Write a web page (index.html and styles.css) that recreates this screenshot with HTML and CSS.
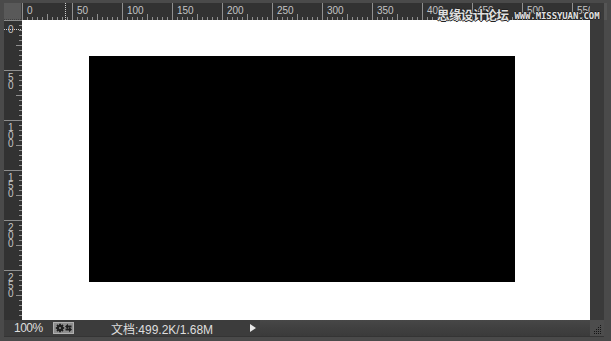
FILE: index.html
```html
<!DOCTYPE html>
<html lang="zh">
<head>
<meta charset="utf-8">
<title>Photoshop canvas</title>
<link rel="stylesheet" href="styles.css">
</head>
<body>
<div class="window">
  <div class="frame">
    <div class="corner"></div>
    <div class="hruler">
      <div class="hcell"><span>0</span></div>
      <div class="hcell"><span>50</span></div>
      <div class="hcell"><span>100</span></div>
      <div class="hcell"><span>150</span></div>
      <div class="hcell"><span>200</span></div>
      <div class="hcell"><span>250</span></div>
      <div class="hcell"><span>300</span></div>
      <div class="hcell"><span>350</span></div>
      <div class="hcell"><span>400</span></div>
      <div class="hcell"><span>450</span></div>
      <div class="hcell"><span>500</span></div>
      <div class="hcell"><span>550</span></div>
      <div class="hguide"></div>
    </div>
    <div class="topright"></div>

    <div class="vruler">
      <div class="vcell"><span>0</span></div>
      <div class="vcell"><span>5</span><span>0</span></div>
      <div class="vcell"><span>1</span><span>0</span><span>0</span></div>
      <div class="vcell"><span>1</span><span>5</span><span>0</span></div>
      <div class="vcell"><span>2</span><span>0</span><span>0</span></div>
      <div class="vcell"><span>2</span><span>5</span><span>0</span></div>
      <div class="vguide"></div>
    </div>
    <div class="canvas">
      <div class="shape"></div>
    </div>
    <div class="vscroll"></div>

    <div class="status">
      <div class="info">
        <span class="zoom">100%</span>
        <span class="toggle">
          <svg width="21" height="12" viewBox="0 0 21 12">
            <rect x="0" y="0" width="21" height="12" fill="#8e8e8e"/>
            <rect x="0.5" y="0.5" width="20" height="11" fill="none" stroke="#b0b0b0"/>
            <g stroke="#1e1e1e" stroke-width="1.8">
              <line x1="7" y1="1.8" x2="7" y2="10.2"/>
              <line x1="2.8" y1="6" x2="11.2" y2="6"/>
              <line x1="4" y1="3" x2="10" y2="9"/>
              <line x1="10" y1="3" x2="4" y2="9"/>
            </g>
            <circle cx="7" cy="6" r="3" fill="#1e1e1e"/>
            <circle cx="7" cy="6" r="1" fill="#8e8e8e"/>
            <path d="M12 4.5 L15 1.8 L15 3.5 L18.5 3.5 L18.5 5.5 L15 5.5 L15 7.2 Z" fill="#1e1e1e"/>
            <path d="M19 7.5 L16 4.8 L16 6.5 L12.5 6.5 L12.5 8.5 L16 8.5 L16 10.2 Z" fill="#1e1e1e"/>
          </svg>
        </span>
        <span class="doc">文档:499.2K/1.68M</span>
        <span class="play"></span>
      </div>
      <div class="hscroll"></div>
    </div>
    <div class="grip">
      <svg width="14" height="16" viewBox="0 0 14 16">
        <g fill="#141414">
          <rect x="10" y="5" width="1" height="1"/>
          <rect x="8" y="7" width="1" height="1"/><rect x="10" y="7" width="1" height="1"/>
          <rect x="6" y="9" width="1" height="1"/><rect x="8" y="9" width="1" height="1"/><rect x="10" y="9" width="1" height="1"/>
          <rect x="4" y="11" width="1" height="1"/><rect x="6" y="11" width="1" height="1"/><rect x="8" y="11" width="1" height="1"/><rect x="10" y="11" width="1" height="1"/>
          <rect x="4" y="13" width="1" height="1"/><rect x="6" y="13" width="1" height="1"/><rect x="8" y="13" width="1" height="1"/><rect x="10" y="13" width="1" height="1"/>
        </g>
      </svg>
    </div>
  </div>
  <div class="watermark"><span class="wm-cn">思缘设计论坛</span><span class="wm-en">WWW.MISSYUAN.COM</span></div>
</div>
</body>
</html>
```

FILE: styles.css
```css
* { box-sizing: border-box; }
html, body { margin: 0; padding: 0; }
body {
  width: 611px;
  height: 341px;
  overflow: hidden;
  background: #4a4a4a;
  font-family: "Liberation Sans", Arial, "Noto Sans CJK SC", sans-serif;
}
.window {
  position: relative;
  width: 611px;
  height: 341px;
  padding: 3px 0 0 4px;
  background: #4a4a4a;
}
.frame {
  display: grid;
  grid-template-columns: 18px 568px 14px 7px;
  grid-template-rows: 17px 300px 16px 1px 4px;
  width: 607px;
}
.corner {
  grid-column: 1; grid-row: 1;
  background:
    repeating-linear-gradient(to right, #3e3e3e 0 1px, transparent 1px 2px) left bottom / 100% 1px no-repeat,
    #595959;
  border-right: 1px solid #3a3a3a;
}
.hruler {
  grid-column: 2; grid-row: 1;
  position: relative;
  display: flex;
  overflow: hidden;
  background: #323232;
}
.hcell {
  flex: 0 0 50px;
  height: 17px;
  border-left: 1px solid #8f8f8f;
  background:
    linear-gradient(#8f8f8f, #8f8f8f) 24px bottom / 1px 6px no-repeat,
    repeating-linear-gradient(to right, transparent 0 4px, #8f8f8f 4px 5px) left bottom / 100% 3px no-repeat;
}
.hcell span {
  display: block;
  padding: 3px 0 0 4px;
  font-size: 10px;
  line-height: 9px;
  color: #c4c4c4;
}
.hguide {
  position: absolute;
  left: 43px; top: 0;
  width: 1px; height: 17px;
  background: repeating-linear-gradient(#d0d0d0 0 1px, transparent 1px 2px);
}
.topright {
  grid-column: 3 / span 2; grid-row: 1;
  background: #3a3a3a;
  border-right: 4px solid #4a4a4a;
  box-shadow: inset -3px 0 0 #555;
}
.vruler {
  grid-column: 1; grid-row: 2;
  position: relative;
  display: flex;
  flex-direction: column;
  overflow: hidden;
  background: #323232;
}
.vcell {
  flex: 0 0 50px;
  border-top: 1px solid #8f8f8f;
  padding: 3px 0 0 4px;
  display: flex;
  flex-direction: column;
  background:
    linear-gradient(#8f8f8f, #8f8f8f) right 24px / 6px 1px no-repeat,
    repeating-linear-gradient(transparent 0 4px, #8f8f8f 4px 5px) right top / 3px 100% no-repeat;
}
.vcell span {
  display: block;
  font-size: 10px;
  line-height: 8px;
  height: 8px;
  color: #c4c4c4;
}
.vcell:first-child { padding-top: 5px; }
.vguide {
  position: absolute;
  left: 0; top: 9px;
  width: 18px; height: 1px;
  background: repeating-linear-gradient(to right, #d0d0d0 0 1px, transparent 1px 2px);
}
.canvas {
  grid-column: 2; grid-row: 2;
  background: #ffffff;
  padding: 36px 0 0 67px;
}
.shape {
  width: 426px;
  height: 226px;
  background: #000000;
}
.vscroll {
  grid-column: 3; grid-row: 2 / span 1;
  background: #3a3a3a;
}
.status {
  grid-column: 1 / span 2; grid-row: 3;
  display: flex;
  background: #3c3c3c;
}
.info {
  flex: 0 0 256px;
  display: flex;
  align-items: center;
  padding-left: 10px;
  background: #3c3c3c;
}
.zoom {
  width: 39px;
  font-size: 12px;
  letter-spacing: -0.5px;
  color: #dedede;
}
.toggle {
  display: flex;
  width: 58px;
}
.doc {
  width: 139px;
  font-size: 12px;
  color: #dedede;
}
.play {
  width: 0; height: 0;
  border-left: 6px solid #e6e6e6;
  border-top: 4px solid transparent;
  border-bottom: 4px solid transparent;
}
.hscroll {
  flex: 1;
  background: linear-gradient(#474747, #404040 50%, #3b3b3b);
}
.grip {
  grid-column: 3; grid-row: 3;
  background: #4d4d4d;
  display: flex;
}
.frame::after {
  content: "";
  grid-column: 1 / span 3; grid-row: 4;
  background: #343434;
}
.watermark {
  position: absolute;
  left: 437px; top: 8px;
  display: flex;
  align-items: flex-end;
  gap: 6px;
  color: #e0e0e0;
  text-shadow: -1px 0 #222, 1px 0 #222, 0 -1px #222, 0 1px #222;
  white-space: nowrap;
}
.wm-cn {
  font-family: "Noto Sans CJK SC", sans-serif;
  font-size: 12.5px;
  font-weight: bold;
  line-height: 14px;
  letter-spacing: -0.6px;
}
.wm-en {
  font-family: "DejaVu Sans Mono", monospace;
  font-size: 9px;
  font-weight: bold;
  line-height: 10px;
  letter-spacing: -0.1px;
  padding-bottom: 1px;
}
```
